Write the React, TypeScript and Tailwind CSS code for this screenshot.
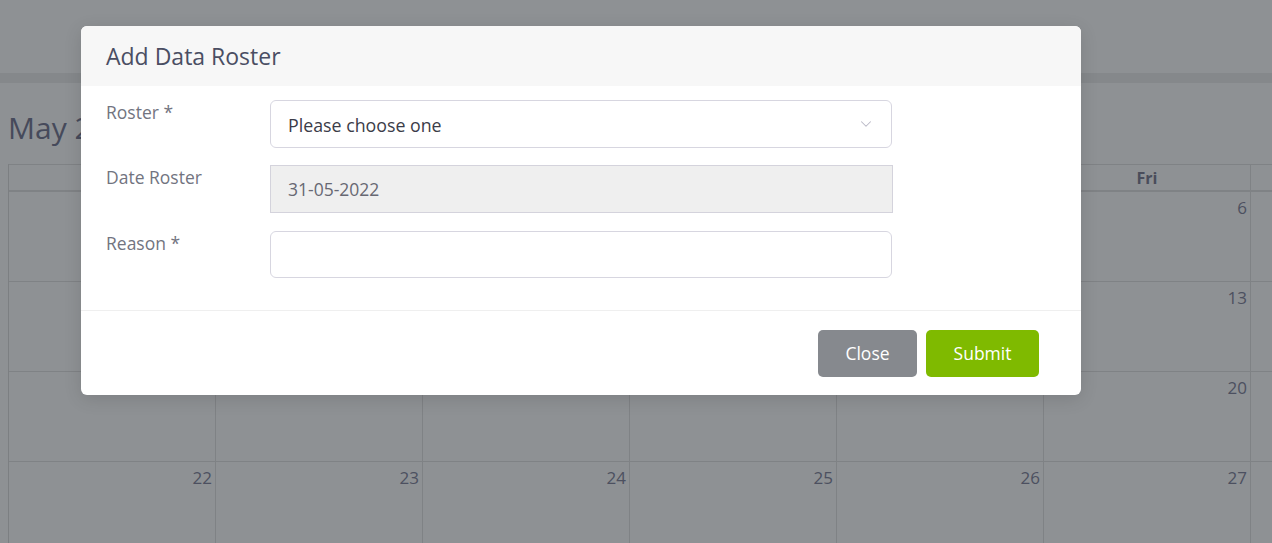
import { ChevronDown } from 'lucide-react'

const days = ['Sun', 'Mon', 'Tue', 'Wed', 'Thu', 'Fri', 'Sat']

// May 2022 starts on a Sunday
const weeks = [0, 1, 2, 3, 4].map((w) =>
  days.map((_, d) => {
    const n = w * 7 + d + 1
    return n <= 31 ? n : null
  })
)

function Calendar() {
  return (
    <div className="px-2">
      <h2 className="mt-[27px] mb-[18px] text-[30px] leading-[36px] text-[#464a5b]">May 2022</h2>
      <div className="w-[1456px] border-l border-[#7c7f82]">
        <div className="grid grid-cols-[repeat(7,207px)] border-t border-b-2 border-[#7f8285]">
          {days.map((d) => (
            <div
              key={d}
              className="h-[25px] border-r border-[#7f8285] text-center text-[16px] font-bold leading-[26px] text-[#4a4d5b]"
            >
              {d}
            </div>
          ))}
        </div>
        {weeks.map((week, i) => (
          <div key={i} className="grid grid-cols-[repeat(7,207px)] border-b border-[#7f8285]">
            {week.map((n, j) => (
              <div
                key={j}
                className="h-[89px] border-r border-[#7f8285] pr-[3px] pt-[4px] text-right text-[17px] leading-[24px] text-[#4c5060]"
              >
                {n}
              </div>
            ))}
          </div>
        ))}
      </div>
    </div>
  )
}

function RosterModal() {
  return (
    <div className="absolute left-[81px] top-[26px] w-[1000px] overflow-hidden rounded-[6px] bg-white shadow-[0_4px_18px_rgba(0,0,0,0.12)]">
      {/* header */}
      <div className="flex h-[60px] items-center bg-[#f7f7f7] px-[25px]">
        <h4 className="text-[23px] leading-[30px] text-[#4a4e63]">Add Data Roster</h4>
      </div>

      {/* body */}
      <div className="flex flex-col px-[25px] pt-[14px] pb-[32px]">
        <div className="flex">
          <label className="w-[164px] text-[17.5px] leading-[24px] text-[#72747f]">Roster *</label>
          <div className="flex h-[48px] w-[622px] items-center justify-between rounded-[6px] border border-[#d7d6e0] bg-white pl-[17px] pr-[16px]">
            <span className="pt-[3px] text-[17.8px] text-[#3b3c48]">Please choose one</span>
            <ChevronDown className="h-[18px] w-[18px] text-[#b9b8c6]" strokeWidth={1.4} />
          </div>
        </div>
        <div className="mt-[17px] flex">
          <label className="w-[164px] text-[17.5px] leading-[24px] text-[#72747f]">Date Roster</label>
          <div className="flex h-[48px] w-[623px] items-center border border-[#d4d3dc] bg-[#efefef] pl-[17px]">
            <span className="text-[17.5px] text-[#676873]">31-05-2022</span>
          </div>
        </div>
        <div className="mt-[18px] flex">
          <label className="w-[164px] text-[17.5px] leading-[24px] text-[#72747f]">Reason *</label>
          <div className="h-[47px] w-[622px] rounded-[6px] border border-[#d7d6e0] bg-white" />
        </div>
      </div>

      {/* footer */}
      <div className="flex h-[85px] items-center justify-end gap-[9px] border-t border-[#efefef] pr-[42px]">
        <button className="h-[47px] w-[99px] rounded-[5px] bg-[#86898e] text-[17.5px] text-white">Close</button>
        <button className="h-[47px] w-[113px] rounded-[5px] bg-[#7fba00] text-[17.5px] text-white">Submit</button>
      </div>
    </div>
  )
}

export default function App() {
  return (
    <div className="relative h-[543px] w-full overflow-hidden bg-[#8e9194] font-['Open_Sans',sans-serif]">
      <div className="h-[73px]" />
      <div className="h-[10px] bg-[#85888b]" />
      <Calendar />
      <RosterModal />
    </div>
  )
}
